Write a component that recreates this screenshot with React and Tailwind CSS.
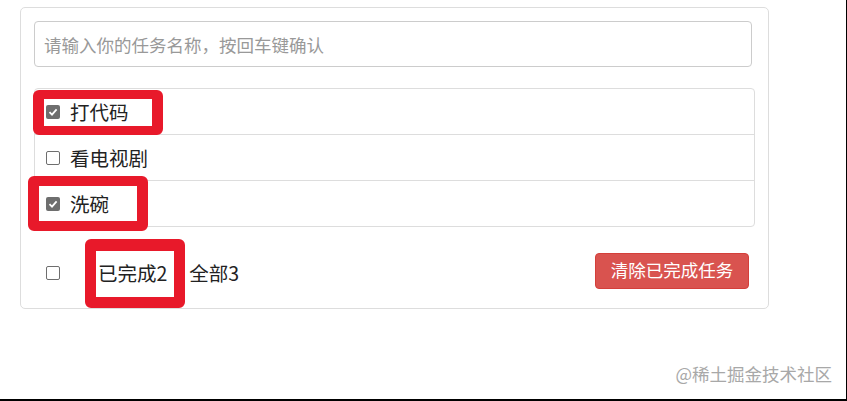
import React from "react";

const Box = ({ checked }) =>
  checked ? (
    <span className="w-[14px] h-[14px] rounded-[2px] bg-[#6e6e6e] flex items-center justify-center shrink-0">
      <svg width="10" height="10" viewBox="0 0 10 10">
        <path d="M1.5 5.2 L4 7.6 L8.6 2.4" fill="none" stroke="#fff" strokeWidth="1.8" />
      </svg>
    </span>
  ) : (
    <span className="w-[14px] h-[14px] rounded-[2px] border border-[#6e6e6e] bg-white shrink-0" />
  );

const todos = [
  { name: "打代码", done: true },
  { name: "看电视剧", done: false },
  { name: "洗碗", done: true },
];

const App = () => {
  return (
    <div
      className="relative w-[847px] h-[401px] bg-white border-r border-b-2 border-black overflow-hidden"
      style={{ fontFamily: '"Noto Sans CJK SC", "Noto Sans", sans-serif' }}
    >
      <div className="ml-[20px] mt-[7px] w-[749px] border border-[#dddddd] rounded-[5px] pt-[13px]">
        <input
          className="ml-[13px] w-[718px] h-[46px] border border-[#cccccc] rounded-[4px] px-[9px] text-[17.5px] text-[#333] placeholder:text-[#999] outline-none"
          placeholder="请输入你的任务名称，按回车键确认"
        />
        <ul className="ml-[13px] mt-[21px] w-[721px] border border-[#dddddd] rounded-[4px]">
          {todos.map((t, i) => (
            <li
              key={t.name}
              className={
                "h-[45px] flex items-center gap-[10px] pl-[11px] text-[19.5px] text-[#222] " +
                (i < todos.length - 1 ? "border-b border-[#dddddd] h-[46px]" : "")
              }
            >
              <Box checked={t.done} />
              <span>{t.name}</span>
            </li>
          ))}
        </ul>
        <div className="h-[81px] flex items-center pl-[25px] pr-[19px] pt-[6px]">
          <div className="flex items-center mt-[4px] text-[19.5px] text-[#222]">
            <Box checked={false} />
            <span className="ml-[38px]">已完成2</span>
            <span className="ml-[22px]">全部3</span>
          </div>
          <button className="ml-auto w-[154px] h-[36px] bg-[#d9534f] border border-[#d43f3a] rounded-[4px] text-white text-[17.5px]">
            清除已完成任务
          </button>
        </div>
      </div>

      <div className="absolute left-[33px] top-[90px] w-[130px] h-[45px] border-[9px] border-x-[11px] border-[#e8192a] rounded-[6px]" />
      <div className="absolute left-[28px] top-[176px] w-[120px] h-[55px] border-[10px] border-x-[11px] border-[#e8192a] rounded-[6px]" />
      <div className="absolute left-[85px] top-[239px] w-[100px] h-[69px] border-[11px] border-t-[12px] border-[#e8192a] rounded-[6px]" />

      <div className="absolute right-[14px] top-[365px] text-[17.5px] text-[#a8a8a8] leading-none">
        @稀土掘金技术社区
      </div>
    </div>
  );
};

export default App;
